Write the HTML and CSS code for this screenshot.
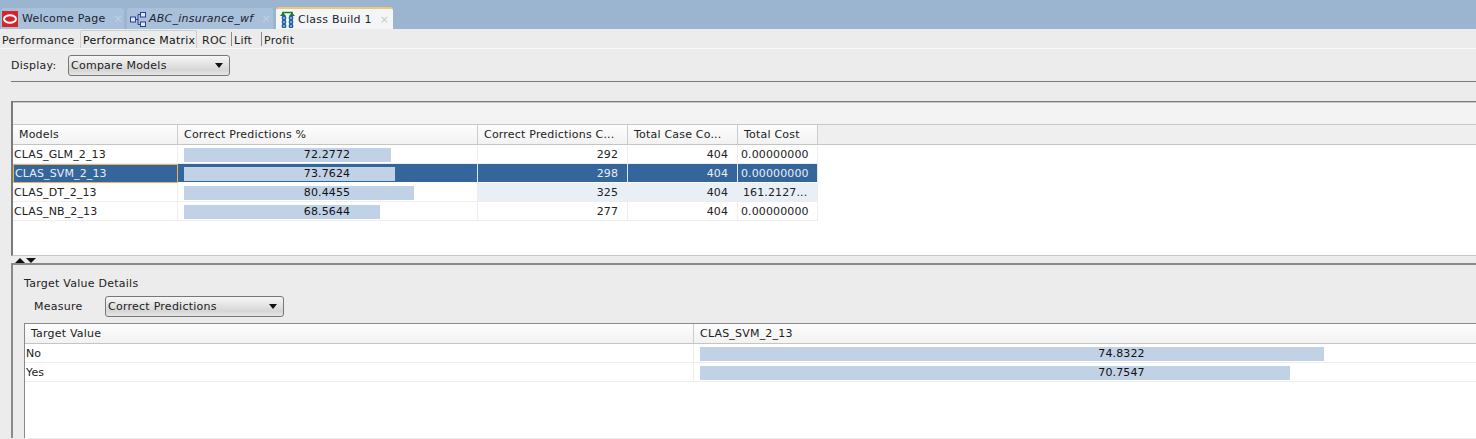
FILE: index.html
```html
<!DOCTYPE html>
<html lang="en">
<head>
    <meta charset="UTF-8">
    <title>Class Build 1</title>
    <link rel="stylesheet" href="styles.css">
</head>
<body>
<div class="tabbar">
    <div class="tab">
        <svg class="tab-icon" width="16" height="16" viewBox="0 0 16 16">
            <rect width="16" height="16" fill="#d8232a"/>
            <ellipse cx="8" cy="8" rx="6" ry="3.8" fill="none" stroke="#fff" stroke-width="2"/>
        </svg>
        <span class="tab-label">Welcome Page</span>
        <span class="tab-close">×</span>
    </div>
    <div class="tab tab-wf">
        <svg class="tab-icon" width="16" height="16" viewBox="0 0 16 16" fill="#dfe8f5" stroke="#27408f">
            <path d="M5 8.5h3M8 3.5v10M8 3.5h2M8 13.5h2" fill="none"/>
            <rect x="0.5" y="6" width="5" height="5"/>
            <rect x="10.5" y="1.5" width="5" height="4.5"/>
            <rect x="10.5" y="11" width="5" height="4.5"/>
        </svg>
        <span class="tab-label tab-italic">ABC_insurance_wf</span>
        <span class="tab-close">×</span>
    </div>
    <div class="tab tab-active">
        <svg class="tab-icon" width="15" height="18" viewBox="0 0 15 18">
            <path d="M3 6V2.5h9V6" fill="none" stroke="#1d7a2e" stroke-width="1.6"/>
            <path d="M0 6h6L3 2.5zM9 6h6L12 2.5z" fill="#1d7a2e"/>
            <g fill="#9cc2e8" stroke="#1f5fa8" stroke-width="1.4">
                <circle cx="4" cy="8" r="1.7"/><circle cx="11" cy="8" r="1.7"/>
                <circle cx="4" cy="12" r="1.7"/><circle cx="11" cy="12" r="1.7"/>
                <circle cx="4" cy="16" r="1.7"/><circle cx="11" cy="16" r="1.7"/>
            </g>
        </svg>
        <span class="tab-label">Class Build 1</span>
        <span class="tab-close">×</span>
    </div>
</div>

<div class="subtabs">
    <span class="subtab subtab-first">Performance</span>
    <span class="subtab subtab-active">Performance Matrix</span>
    <span class="subtab subtab-roc">ROC</span>
    <span class="subtab subtab-sep subtab-lift">Lift</span>
    <span class="subtab subtab-sep">Profit</span>
</div>

<div class="display-row">
    <span class="display-label">Display:</span>
    <div class="select select-display">Compare Models<span class="select-arrow"></span></div>
</div>

<div class="upper">
    <div class="toolbar"></div>
    <div class="models">
        <div class="row head">
            <div class="cell c-name">Models</div>
            <div class="cell c-pct">Correct Predictions %</div>
            <div class="cell c-count">Correct Predictions C...</div>
            <div class="cell c-total">Total Case Co...</div>
            <div class="cell c-cost">Total Cost</div>
        </div>
        <div class="row">
            <div class="cell c-name">CLAS_GLM_2_13</div>
            <div class="cell c-pct"><div class="track"><div class="fill" style="width:72.2772%"></div><span class="val">72.2772</span></div></div>
            <div class="cell c-count num">292</div>
            <div class="cell c-total num">404</div>
            <div class="cell c-cost">0.00000000</div>
        </div>
        <div class="row selected">
            <div class="cell c-name focus">CLAS_SVM_2_13</div>
            <div class="cell c-pct"><div class="track"><div class="fill" style="width:73.7624%"></div><span class="val">73.7624</span></div></div>
            <div class="cell c-count num">298</div>
            <div class="cell c-total num">404</div>
            <div class="cell c-cost">0.00000000</div>
        </div>
        <div class="row alt">
            <div class="cell c-name">CLAS_DT_2_13</div>
            <div class="cell c-pct"><div class="track"><div class="fill" style="width:80.4455%"></div><span class="val">80.4455</span></div></div>
            <div class="cell c-count num">325</div>
            <div class="cell c-total num">404</div>
            <div class="cell c-cost cost-long">161.2127...</div>
        </div>
        <div class="row">
            <div class="cell c-name">CLAS_NB_2_13</div>
            <div class="cell c-pct"><div class="track"><div class="fill" style="width:68.5644%"></div><span class="val">68.5644</span></div></div>
            <div class="cell c-count num">277</div>
            <div class="cell c-total num">404</div>
            <div class="cell c-cost">0.00000000</div>
        </div>
    </div>
</div>

<div class="splitter">
    <span class="arrow-up"></span>
    <span class="arrow-down"></span>
</div>

<div class="lower">
    <div class="details-title">Target Value Details</div>
    <div class="measure-row">
        <span class="measure-label">Measure</span>
        <div class="select select-measure">Correct Predictions<span class="select-arrow"></span></div>
    </div>
    <div class="targets">
        <div class="row head">
            <div class="cell c-target">Target Value</div>
            <div class="cell c-model">CLAS_SVM_2_13</div>
        </div>
        <div class="row">
            <div class="cell c-target flush">No</div>
            <div class="cell c-model"><div class="track"><div class="fill" style="width:74.8322%"></div><span class="val">74.8322</span></div></div>
        </div>
        <div class="row">
            <div class="cell c-target flush">Yes</div>
            <div class="cell c-model"><div class="track"><div class="fill" style="width:70.7547%"></div><span class="val">70.7547</span></div></div>
        </div>
    </div>
</div>
</body>
</html>
```

FILE: styles.css
```css
html, body {
    margin: 0;
    height: 439px;
    overflow: hidden;
}
body {
    background-color: #ececec;
    color: #222;
    font-family: "DejaVu Sans", sans-serif;
    font-size: 11px;
    letter-spacing: 0.25px;
}

/* document tabs */
.tabbar {
    display: flex;
    align-items: flex-end;
    gap: 3px;
    height: 29px;
    padding-left: 1px;
    background-color: #9bb4d0;
    box-sizing: border-box;
}
.tab {
    display: flex;
    align-items: center;
    box-sizing: border-box;
    width: 123px;
    height: 21px;
    padding-left: 1px;
    background-color: #a9c0da;
    border-radius: 3px 3px 0 0;
    color: #1c2430;
}
.tab-wf {
    width: 146px;
    padding-left: 3px;
}
.tab-active {
    width: 117px;
    height: 22px;
    padding-left: 4px;
    background-color: #f4f5f6;
    border-top: 2px solid #f0c67c;
}
.tab-icon {
    flex: none;
}
.tab-label {
    margin-left: 4px;
    white-space: nowrap;
}
.tab-italic {
    margin-left: 3px;
    font-style: italic;
}
.tab-close {
    margin-left: 8px;
    color: #c3d2e3;
    font-size: 11px;
}
.tab-active .tab-label {
    margin-left: 3px;
}
.tab-active .tab-close {
    color: #c9c9c9;
}

/* view tabs */
.subtabs {
    display: flex;
    align-items: flex-end;
    height: 20px;
    box-sizing: border-box;
    border-bottom: 1px solid #f8f8f8;
}
.subtab {
    height: 18px;
    line-height: 21px;
    white-space: nowrap;
}
.subtab-first {
    width: 80px;
    padding-left: 2px;
    box-sizing: border-box;
}
.subtab-active {
    width: 117px;
    box-sizing: border-box;
    padding-left: 2px;
    border: 1px solid #cfcfcf;
    border-bottom: none;
    border-radius: 2px 2px 0 0;
    color: #111;
    line-height: 19px;
}
.subtab-roc {
    width: 34px;
    padding-left: 5px;
    box-sizing: border-box;
}
.subtab-sep {
    padding-left: 3px;
    background: linear-gradient(#8a8a8a, #8a8a8a) left 2px / 1px 14px no-repeat;
}
.subtab-lift {
    width: 30px;
    box-sizing: border-box;
}

/* display row */
.display-row {
    display: flex;
    align-items: center;
    height: 33px;
    box-sizing: border-box;
    margin-left: 11px;
    padding-top: 6px;
    padding-bottom: 6px;
    border-bottom: 1px solid #7a7a7a;
}
.display-label {
    width: 57px;
}
.select {
    display: flex;
    align-items: center;
    justify-content: space-between;
    box-sizing: border-box;
    height: 21px;
    padding: 0 6px 0 2px;
    border: 1px solid #777;
    border-radius: 3px;
    background: linear-gradient(#f6f6f6, #d6d6d6 75%, #e6e6e6);
    color: #222;
}
.select-display {
    width: 162px;
}
.select-measure {
    width: 179px;
}
.select-arrow {
    width: 0;
    height: 0;
    border-left: 4px solid transparent;
    border-right: 4px solid transparent;
    border-top: 5px solid #111;
}

/* models table */
.upper {
    margin-top: 19px;
    margin-left: 11px;
    height: 155px;
    box-sizing: border-box;
    border-left: 2px solid #7a7a7a;
    border-top: 1px solid #7a7a7a;
    border-bottom: 1px solid #c8c8c8;
    background-color: #fff;
}
.toolbar {
    height: 21px;
    background-color: #f3f3f3;
    border-top: 1px solid #c8c8c8;
    border-bottom: 1px solid #c8c8c8;
}
.models {
    background-color: #fff;
}
.row {
    display: flex;
    height: 19px;
    letter-spacing: 0.12px;
}
.cell {
    flex: none;
    box-sizing: border-box;
    height: 19px;
    line-height: 20px;
    padding: 0 9px 0 1px;
    border-right: 1px solid #eee;
    border-bottom: 1px solid #eee;
    white-space: nowrap;
    overflow: hidden;
}
.c-name { width: 165px; }
.c-pct { width: 300px; padding: 3px 7px 0 6px; }
.c-count { width: 150px; }
.c-total { width: 110px; }
.c-cost { width: 80px; padding-left: 3px; padding-right: 0; }
.cost-long { padding-left: 5px; }
.num { text-align: right; }

.head {
    height: 20px;
    letter-spacing: 0.2px;
}
.head .cell {
    height: 20px;
    line-height: 19px;
    padding: 0 9px 0 6px;
    background: linear-gradient(#fdfdfd, #f2f2f2);
    border-right: 1px solid #cdcdcd;
    border-bottom: 1px solid #c4c4c4;
}
.models .head {
    background-color: #efefef;
    border-bottom: 1px solid #c4c4c4;
    box-sizing: border-box;
}
.selected .cell {
    background-color: #34659b;
    color: #e8eef6;
    border-right-color: #dfe7f1;
    border-bottom-color: #fff;
}
.selected .focus {
    border: none;
    padding: 0 9px 0 2px;
    box-shadow: inset 0 0 0 1px #e8b45c;
}
.alt .c-count, .alt .c-total, .alt .c-cost {
    background-color: #e9eff7;
}

/* value bars */
.track {
    display: grid;
    height: 12px;
    line-height: 14px;
}
.fill, .val {
    grid-area: 1 / 1;
}
.fill {
    background-color: #c1d1e6;
}
.val {
    z-index: 1;
    text-align: center;
    color: #111;
}

/* splitter */
.splitter {
    display: flex;
    align-items: flex-end;
    gap: 1px;
    height: 7px;
    padding-left: 15px;
}
.arrow-up, .arrow-down {
    width: 0;
    height: 0;
    border-left: 5px solid transparent;
    border-right: 5px solid transparent;
}
.arrow-up { border-bottom: 5px solid #111; }
.arrow-down { border-top: 5px solid #111; }

/* target value details */
.lower {
    margin-left: 11px;
    height: 175px;
    box-sizing: border-box;
    padding: 11px 0 0 11px;
    border-left: 2px solid #8a8a8a;
    border-top: 2px solid #8a8a8a;
    overflow: hidden;
}
.details-title {
    height: 20px;
    line-height: 16px;
}
.measure-row {
    display: flex;
    align-items: center;
    height: 21px;
    padding-left: 10px;
}
.measure-label {
    width: 71px;
}
.targets {
    margin-top: 6px;
    width: 1600px;
    height: 120px;
    background-color: #fff;
    border-left: 1px solid #8a8a8a;
    border-top: 1px solid #8a8a8a;
}
.c-target { width: 669px; }
.c-model { width: 847px; padding: 3px 6px 0; }
.targets .val { padding-left: 9px; }
.flush { padding-left: 1px; }
```
